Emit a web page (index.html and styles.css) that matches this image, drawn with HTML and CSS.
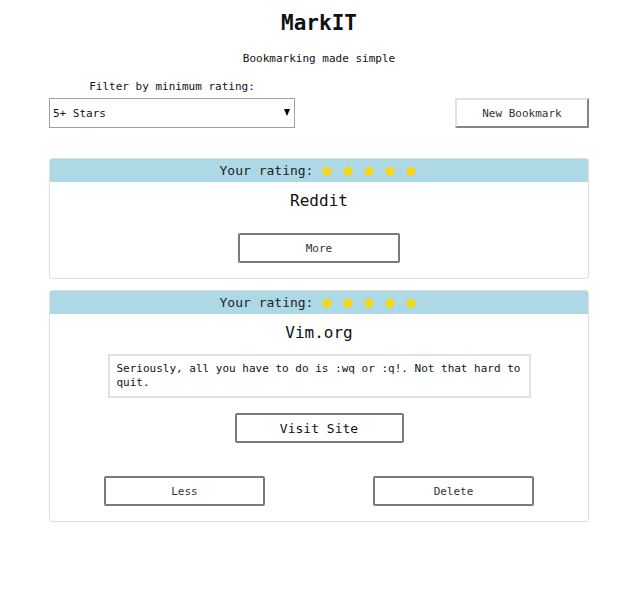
FILE: index.html
```html
<!DOCTYPE html>
<html lang="en">
<head>
<meta charset="utf-8">
<title>MarkIT</title>
<link rel="stylesheet" href="styles.css">
</head>
<body>
<div class="page">
  <h1 class="title">MarkIT</h1>
  <p class="subtitle">Bookmarking made simple</p>

  <div class="toolbar">
    <div class="filter">
      <label class="filter-label" for="rating">Filter by minimum rating:</label>
      <div class="select-wrap">
        <select id="rating" class="select">
          <option>5+ Stars</option>
        </select>
      </div>
    </div>
    <button class="btn-new">New Bookmark</button>
  </div>

  <div class="card card-first">
    <div class="card-head">
      <span>Your rating:</span>
      <span class="stars">
        <svg class="star" viewBox="0 0 24 24"><path d="M12 1.5l3.2 6.6 7.3 1-5.3 5.1 1.3 7.2L12 18l-6.5 3.4 1.3-7.2L1.5 9.1l7.3-1z"/></svg>
        <svg class="star" viewBox="0 0 24 24"><path d="M12 1.5l3.2 6.6 7.3 1-5.3 5.1 1.3 7.2L12 18l-6.5 3.4 1.3-7.2L1.5 9.1l7.3-1z"/></svg>
        <svg class="star" viewBox="0 0 24 24"><path d="M12 1.5l3.2 6.6 7.3 1-5.3 5.1 1.3 7.2L12 18l-6.5 3.4 1.3-7.2L1.5 9.1l7.3-1z"/></svg>
        <svg class="star" viewBox="0 0 24 24"><path d="M12 1.5l3.2 6.6 7.3 1-5.3 5.1 1.3 7.2L12 18l-6.5 3.4 1.3-7.2L1.5 9.1l7.3-1z"/></svg>
        <svg class="star" viewBox="0 0 24 24"><path d="M12 1.5l3.2 6.6 7.3 1-5.3 5.1 1.3 7.2L12 18l-6.5 3.4 1.3-7.2L1.5 9.1l7.3-1z"/></svg>
      </span>
    </div>
    <div class="card-body">
      <h2 class="card-title">Reddit</h2>
      <button class="btn btn-more">More</button>
    </div>
  </div>

  <div class="card">
    <div class="card-head">
      <span>Your rating:</span>
      <span class="stars">
        <svg class="star" viewBox="0 0 24 24"><path d="M12 1.5l3.2 6.6 7.3 1-5.3 5.1 1.3 7.2L12 18l-6.5 3.4 1.3-7.2L1.5 9.1l7.3-1z"/></svg>
        <svg class="star" viewBox="0 0 24 24"><path d="M12 1.5l3.2 6.6 7.3 1-5.3 5.1 1.3 7.2L12 18l-6.5 3.4 1.3-7.2L1.5 9.1l7.3-1z"/></svg>
        <svg class="star" viewBox="0 0 24 24"><path d="M12 1.5l3.2 6.6 7.3 1-5.3 5.1 1.3 7.2L12 18l-6.5 3.4 1.3-7.2L1.5 9.1l7.3-1z"/></svg>
        <svg class="star" viewBox="0 0 24 24"><path d="M12 1.5l3.2 6.6 7.3 1-5.3 5.1 1.3 7.2L12 18l-6.5 3.4 1.3-7.2L1.5 9.1l7.3-1z"/></svg>
        <svg class="star" viewBox="0 0 24 24"><path d="M12 1.5l3.2 6.6 7.3 1-5.3 5.1 1.3 7.2L12 18l-6.5 3.4 1.3-7.2L1.5 9.1l7.3-1z"/></svg>
      </span>
    </div>
    <div class="card-body">
      <h2 class="card-title">Vim.org</h2>
      <p class="note">Seriously, all you have to do is :wq or :q!. Not that hard to quit.</p>
      <button class="btn btn-visit">Visit Site</button>
      <div class="actions">
        <button class="btn btn-action">Less</button>
        <button class="btn btn-action">Delete</button>
      </div>
    </div>
  </div>
</div>
</body>
</html>
```

FILE: styles.css
```css
* {
  box-sizing: border-box;
}

body {
  margin: 0;
  background: #fff;
  color: #111;
  font-family: "DejaVu Sans Mono", "Liberation Mono", monospace;
  font-size: 11px;
}

.page {
  width: 540px;
  margin: 0 0 0 49px;
  display: flex;
  flex-direction: column;
}

.title {
  margin: 9px 0 0;
  font-size: 21px;
  line-height: 28px;
  font-weight: bold;
  text-align: center;
}

.subtitle {
  margin: 15px 0 0;
  line-height: 14px;
  text-align: center;
}

.toolbar {
  margin-top: 14px;
  display: flex;
  justify-content: space-between;
  align-items: flex-end;
}

.filter {
  width: 246px;
  display: flex;
  flex-direction: column;
  align-items: center;
  gap: 4px;
}

.filter-label {
  line-height: 14px;
}

.select-wrap {
  position: relative;
  width: 100%;
}

.select-wrap::after {
  content: "";
  position: absolute;
  right: 5px;
  top: 11px;
  border-left: 3.5px solid transparent;
  border-right: 3.5px solid transparent;
  border-top: 7px solid #000;
  pointer-events: none;
}

.select {
  appearance: none;
  -webkit-appearance: none;
  width: 100%;
  height: 30px;
  padding: 0 0 0 3px;
  border: 1px solid #a0a0a0;
  border-radius: 0;
  background: #fff;
  color: #111;
  font-family: inherit;
  font-size: 11px;
}

.btn-new {
  width: 134px;
  height: 30px;
  padding: 0;
  background: #fff;
  border: 2px solid;
  border-color: #e2e2e2 #858585 #858585 #e2e2e2;
  color: #333;
  font-family: inherit;
  font-size: 11px;
}

.card {
  margin-top: 11px;
  border: 1px solid #dedede;
  border-radius: 3px;
  overflow: hidden;
}

.card-first {
  margin-top: 30px;
}

.card-head {
  height: 23px;
  background: #add8e6;
  display: flex;
  justify-content: center;
  align-items: center;
  gap: 7px;
  font-size: 13px;
  color: #222;
}

.stars {
  display: flex;
  gap: 7px;
}

.star {
  width: 14px;
  height: 14px;
  fill: #ffd700;
}

.card-body {
  display: flex;
  flex-direction: column;
  align-items: center;
  padding: 9px 0 15px;
}

.card-title {
  margin: 0;
  font-size: 16px;
  line-height: 20px;
  font-weight: normal;
  color: #111;
}

.btn {
  height: 30px;
  padding: 0;
  background: #fff;
  border: 2px solid #7a7a7a;
  border-radius: 2px;
  color: #333;
  font-family: inherit;
  font-size: 11px;
}

.btn-more {
  width: 162px;
  margin-top: 22px;
}

.note {
  width: 423px;
  margin: 11px 0 0;
  padding: 6px 7px 6px;
  border: 2px solid #e2e2e2;
  line-height: 14px;
  font-size: 11px;
  color: #111;
}

.btn-visit {
  width: 169px;
  margin-top: 15px;
  font-size: 13px;
  color: #111;
}

.actions {
  width: 100%;
  margin-top: 33px;
  display: grid;
  grid-template-columns: 1fr 1fr;
  justify-items: center;
}

.btn-action {
  width: 161px;
}
```
